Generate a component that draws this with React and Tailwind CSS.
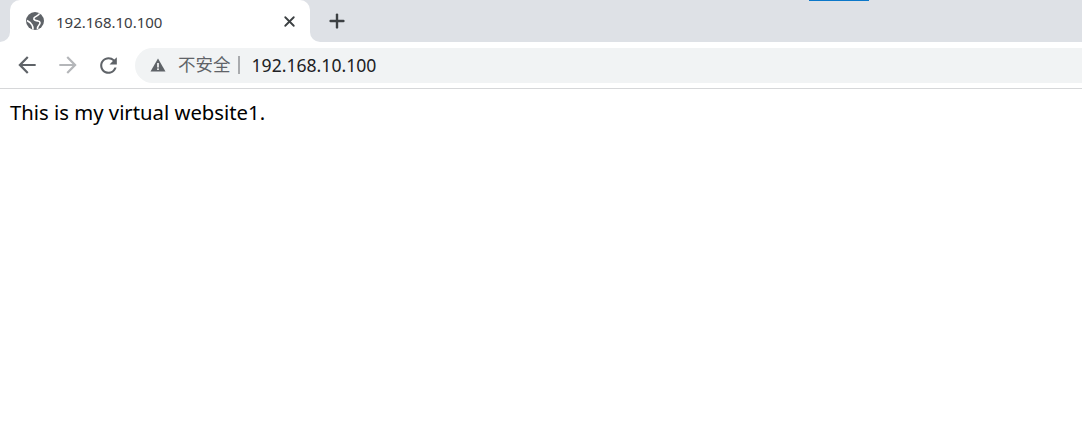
import { X, Plus } from 'lucide-react'

// Inverted corner beside the active tab
function TabFlare({ side }) {
  return (
    <div className="w-[10px] h-full bg-white shrink-0">
      <div className={`w-full h-full bg-[#dee1e6] ${side === 'left' ? 'rounded-br-[10px]' : 'rounded-bl-[10px]'}`} />
    </div>
  )
}

function GlobeIcon() {
  return (
    <svg width="18" height="18" viewBox="0 0 18 18" className="shrink-0">
      <circle cx="9" cy="9" r="9" fill="#5f6368" />
      <path
        d="M13.5 1.5 C12.5 4 9.5 4 8 6 C7 8 10 8.5 12 9 C14.5 9.5 14.5 11.5 13 13 C12 14 11.5 15 11.5 17 M1 8.5 C3 9.5 5 11 6 13 C7 14.5 7 16 7 17.5"
        fill="none"
        stroke="#ffffff"
        strokeWidth="1.6"
      />
    </svg>
  )
}

function WarningIcon() {
  return (
    <svg width="16" height="14" viewBox="0 0 16 14" className="shrink-0">
      <path d="M8 0.5 L15.5 13.5 L0.5 13.5 Z" fill="#5f6368" />
      <rect x="7.2" y="5" width="1.6" height="4.5" fill="#ffffff" />
      <rect x="7.2" y="10.4" width="1.6" height="1.6" fill="#ffffff" />
    </svg>
  )
}

function NavIcon({ d, size = 26, className }) {
  return (
    <svg width={size} height={size} viewBox="0 0 24 24" fill="currentColor" className={`shrink-0 ${className}`}>
      <path d={d} />
    </svg>
  )
}

export default function App() {
  return (
    <div className="relative min-h-[429px] bg-white" style={{ fontFamily: '"Noto Sans", "Noto Sans CJK SC", sans-serif' }}>
      {/* Tab strip */}
      <div className="flex h-[42px] bg-[#dee1e6]">
        <TabFlare side="left" />
        <div className="flex items-center w-[300px] h-full pl-[16px] pr-[12px] bg-white rounded-t-[10px] shrink-0">
          <GlobeIcon />
          <span className="ml-[12px] pt-[2px] text-[15px] text-[#3c4043] leading-none">192.168.10.100</span>
          <X size={17} strokeWidth={2.6} className="ml-auto text-[#3c4043]" />
        </div>
        <TabFlare side="right" />
        <div className="flex items-center ml-[6px]">
          <Plus size={22} strokeWidth={2.6} className="text-[#3c4043]" />
        </div>
      </div>
      <div className="absolute top-0 left-[809px] w-[60px] h-px bg-[#0b77c9]" />

      {/* Toolbar */}
      <div className="flex items-center h-[46px] pl-[14px] border-b border-[#d6d7d9] box-content">
        <NavIcon d="M20 11H7.83l5.59-5.59L12 4l-8 8 8 8 1.41-1.41L7.83 13H20v-2z" className="text-[#5f6368]" />
        <NavIcon d="M12 4l-1.41 1.41L16.17 11H4v2h12.17l-5.58 5.59L12 20l8-8z" className="ml-[15px] text-[#b4b6b9]" />
        <NavIcon
          size={25}
          d="M17.65 6.35A7.958 7.958 0 0012 4c-4.42 0-7.99 3.58-7.99 8s3.57 8 7.99 8c3.73 0 6.84-2.55 7.73-6h-2.08A5.99 5.99 0 0112 18c-3.31 0-6-2.69-6-6s2.69-6 6-6c1.66 0 3.14.69 4.22 1.78L13 11h7V4l-2.35 2.35z"
          className="ml-[15px] text-[#5f6368]"
        />
        <div className="flex items-center flex-1 h-[35px] ml-[14px] pl-[15px] bg-[#f1f3f4] rounded-l-full">
          <WarningIcon />
          <span className="ml-[12px] text-[17.5px] text-[#5f6368] leading-none">不安全</span>
          <span className="ml-[7px] w-[2px] h-[18px] bg-[#a9abae]" />
          <span className="ml-[12px] pt-[2px] text-[17.6px] text-[#202124] leading-none">192.168.10.100</span>
        </div>
      </div>

      {/* Page body */}
      <p className="pl-[10px] pt-[9px] text-[20.3px] leading-[28px] text-black">This is my virtual website1.</p>
    </div>
  )
}
